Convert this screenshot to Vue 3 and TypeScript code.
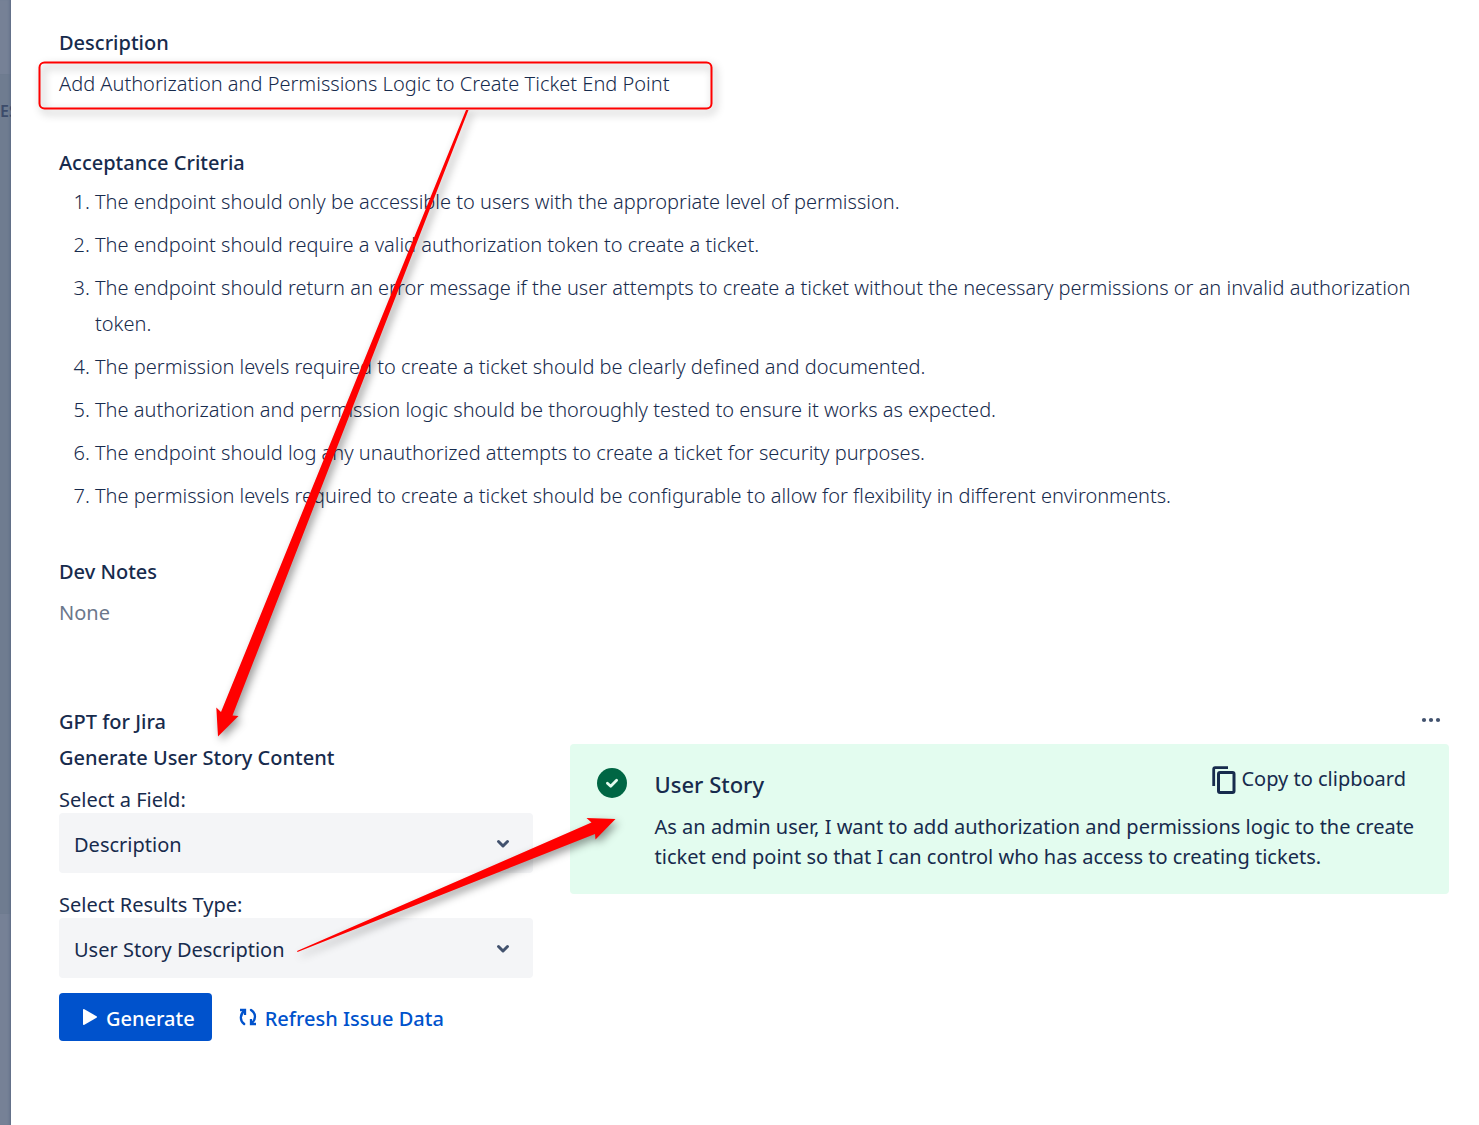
<script setup lang="ts">
import { ref } from 'vue'

const criteria: string[] = [
  'The endpoint should only be accessible to users with the appropriate level of permission.',
  'The endpoint should require a valid authorization token to create a ticket.',
  'The endpoint should return an error message if the user attempts to create a ticket without the necessary permissions or an invalid authorization token.',
  'The permission levels required to create a ticket should be clearly defined and documented.',
  'The authorization and permission logic should be thoroughly tested to ensure it works as expected.',
  'The endpoint should log any unauthorized attempts to create a ticket for security purposes.',
  'The permission levels required to create a ticket should be configurable to allow for flexibility in different environments.',
]

const fields: string[] = ['Description', 'Acceptance Criteria', 'Dev Notes']
const resultTypes: string[] = ['User Story Description', 'Acceptance Criteria']
const field = ref('Description')
const resultType = ref('User Story Description')
</script>

<template>
  <div class="page">
    <aside class="backdrop">
      <div class="backdrop-top"></div>
      <div class="backdrop-board">ES</div>
    </aside>

    <main class="issue">
      <section class="description">
        <h2>Description</h2>
        <p>Add Authorization and Permissions Logic to Create Ticket End Point</p>
      </section>

      <section class="criteria">
        <h2>Acceptance Criteria</h2>
        <ol>
          <li v-for="item in criteria" :key="item">{{ item }}</li>
        </ol>
      </section>

      <section class="notes">
        <h2>Dev Notes</h2>
        <p class="muted">None</p>
      </section>

      <section class="gpt">
        <header class="gpt-head">
          <h2>GPT for Jira</h2>
          <button class="more" type="button" aria-label="More actions">
            <svg width="20" height="6" viewBox="0 0 20 6">
              <circle cx="3" cy="3" r="2.1" />
              <circle cx="10" cy="3" r="2.1" />
              <circle cx="17" cy="3" r="2.1" />
            </svg>
          </button>
        </header>

        <div class="columns">
          <form class="generator" @submit.prevent>
            <h3>Generate User Story Content</h3>
            <label for="field">Select a Field:</label>
            <div class="select">
              <select id="field" v-model="field">
                <option v-for="f in fields" :key="f">{{ f }}</option>
              </select>
              <svg width="14" height="10" viewBox="0 0 14 10"><path d="M2.500 2.500 L7 7 L11.500 2.500" /></svg>
            </div>
            <label for="result">Select Results Type:</label>
            <div class="select">
              <select id="result" v-model="resultType">
                <option v-for="r in resultTypes" :key="r">{{ r }}</option>
              </select>
              <svg width="14" height="10" viewBox="0 0 14 10"><path d="M2.500 2.500 L7 7 L11.500 2.500" /></svg>
            </div>
            <div class="actions">
              <button class="primary" type="submit">
                <svg width="16" height="18" viewBox="0 0 16 18"><path d="M1 2 Q1 .6 2.400 1.200 L14.500 8.300 Q15.500 9 14.500 9.700 L2.400 16.800 Q1 17.400 1 16 Z" fill="#fff" /></svg>
                Generate
              </button>
              <button class="link" type="button">
                <svg width="18" height="18" viewBox="0 0 18 18" fill="none" stroke="#0052cc" stroke-width="2.300">
                  <path d="M5.200 16 C0.600 12.500 0.800 6.500 5.500 2.500" stroke-linecap="round" />
                  <path d="M1 2 H6 V7" />
                  <path d="M12 2 C17.200 5.500 17.200 11.500 12.500 15.500" stroke-linecap="round" />
                  <path d="M17 16 H12 V11" />
                </svg>
                Refresh Issue Data
              </button>
            </div>
          </form>

          <article class="result">
            <svg class="check" width="30" height="30" viewBox="0 0 30 30">
              <circle cx="15" cy="15" r="15" fill="#006644" />
              <path d="M10.400 15.200 L13.700 18.200 L19.600 12.200" fill="none" stroke="#e3fcef" stroke-width="2.800" stroke-linecap="round" stroke-linejoin="round" />
            </svg>
            <div class="result-body">
              <div class="result-head">
                <h4>User Story</h4>
                <button class="copy" type="button">
                  <svg width="24" height="28" viewBox="0 0 24 28" fill="none" stroke="#172b4d">
                    <path d="M1.700 20 V3.200 Q1.700 1.700 3.200 1.700 H16" stroke-width="2.800" />
                    <rect x="6.500" y="6.500" width="15.500" height="20" rx="1.500" stroke-width="3" />
                  </svg>
                  Copy to clipboard
                </button>
              </div>
              <p>As an admin user, I want to add authorization and permissions logic to the create ticket end point so that I can control who has access to creating tickets.</p>
            </div>
          </article>
        </div>
      </section>
    </main>

    <svg class="annotations" width="1479" height="1125" viewBox="0 0 1479 1125" aria-hidden="true">
      <g class="shadowed">
        <rect x="39.500" y="62.500" width="672" height="46" rx="5" fill="none" stroke="#f00" stroke-width="2" />
        <path d="M466 110 L468.500 110 L232.500 715.500 L238.500 716 L218 736.500 L216.300 707.500 L221 712 Z" fill="#f00" />
        <path d="M297 951 L591.500 822.500 L586.500 818 L615.500 819 L595.500 839.500 L595 834 L297.500 952 Z" fill="#f00" />
      </g>
    </svg>
  </div>
</template>

<style>
body {
  margin: 0;
}
</style>

<style scoped>
.page {
  position: relative;
  display: flex;
  min-height: 100vh;
  overflow: hidden;
  background: #fff;
  color: #172b4d;
  font-family: "Noto Sans", "Open Sans", sans-serif;
  font-size: 20px;
  font-weight: 350;
  line-height: 30px;
}

.backdrop {
  flex: none;
  width: 11px;
  overflow: hidden;
  background: #768196;
  box-shadow: inset -3px 0 3px -2px #5c6a84;
}

.backdrop-top {
  height: 74px;
}

.backdrop-board {
  box-sizing: border-box;
  height: 840px;
  padding-top: 22px;
  background: #6f7c90;
  box-shadow: inset -3px 0 3px -2px #5c6a84;
  color: #3c4b6a;
  font-size: 16px;
  font-weight: 600;
}

.issue {
  flex: 1;
  min-width: 0;
  padding: 28px 30px 84px 48px;
}

h2,
h3,
h4,
p,
ol {
  margin: 0;
}

h2,
h3 {
  font-size: 20px;
  font-weight: 500;
}

.description p,
.notes p {
  margin-top: 8px;
  line-height: 36px;
}

.criteria {
  margin-top: 46px;
}

ol {
  margin-top: 6px;
  padding-left: 36px;
}

li {
  line-height: 36px;
}

li + li {
  margin-top: 7px;
}

.notes {
  margin-top: 43px;
}

.notes .muted {
  color: #6b778c;
  font-weight: 400;
}

.gpt {
  margin-top: 76px;
  font-weight: 400;
}

.gpt-head {
  display: flex;
  justify-content: space-between;
}

button {
  margin: 0;
  border: 0;
  background: none;
  color: inherit;
  font: inherit;
  cursor: pointer;
}

.more {
  display: flex;
  align-items: center;
  height: 26px;
  padding: 0 8px;
}

.more svg {
  fill: #42526e;
}

.columns {
  display: grid;
  grid-template-columns: 35fr 65fr;
  align-items: start;
  gap: 37px;
}

h3 {
  padding: 6px 0 10px;
}

label {
  display: block;
  height: 28px;
  padding-top: 2px;
}

.select {
  position: relative;
  margin-bottom: 15px;
}

select {
  display: block;
  width: 100%;
  height: 60px;
  padding: 4px 48px 0 15px;
  appearance: none;
  border: 0;
  border-radius: 4px;
  background: #f4f5f7;
  color: inherit;
  font: inherit;
}

.select svg {
  position: absolute;
  top: 26px;
  right: 23px;
  fill: none;
  stroke: #42526e;
  stroke-width: 3;
  stroke-linecap: round;
  stroke-linejoin: round;
  pointer-events: none;
}

.actions {
  display: flex;
  gap: 12px;
}

.actions button {
  display: flex;
  align-items: center;
  gap: 8px;
  height: 48px;
  border-radius: 4px;
  font-weight: 500;
  white-space: nowrap;
}

.actions svg {
  margin-bottom: 4px;
}

.actions .primary {
  padding: 3px 17px 0 23px;
  background: #0052cc;
  color: #fff;
}

.actions .link {
  padding: 3px 15px 0;
  color: #0052cc;
}

.result {
  display: flex;
  gap: 28px;
  box-sizing: border-box;
  min-height: 150px;
  margin-top: 7px;
  padding: 24px 27px 22px;
  border-radius: 4px;
  background: #e3fcef;
}

.check {
  flex: none;
}

.result-body {
  flex: 1;
  min-width: 0;
}

.result-head {
  display: flex;
  justify-content: space-between;
  height: 32px;
  margin-bottom: 12px;
}

h4 {
  padding-top: 1px;
  font-size: 22px;
  font-weight: 500;
}

.copy {
  display: flex;
  align-items: center;
  gap: 5px;
  height: 22px;
  margin-right: 16px;
  padding: 0;
}

.copy svg {
  margin-top: 2px;
}

.annotations {
  position: absolute;
  top: 0;
  left: 0;
  pointer-events: none;
}

.shadowed {
  filter: drop-shadow(3px 4px 4px rgba(0, 0, 0, 0.4));
}
</style>
